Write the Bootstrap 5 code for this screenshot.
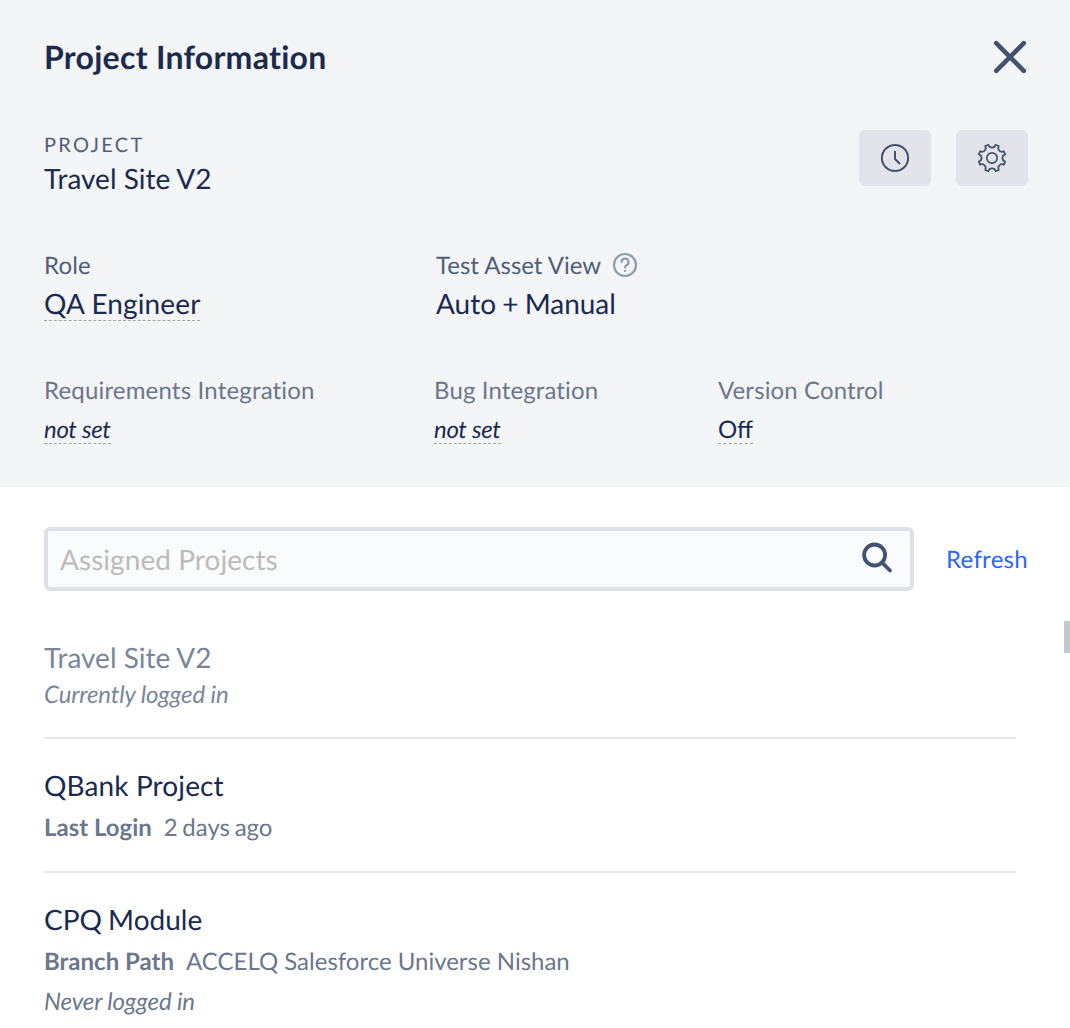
<!DOCTYPE html>
<html lang="en">
<head>
<meta charset="utf-8">
<title>Project Information</title>
<link href="https://cdn.jsdelivr.net/npm/bootstrap@5.3.0/dist/css/bootstrap.min.css" rel="stylesheet">
<style>
  html, body { height: 100%; overflow: hidden; }
  body { font-family: Lato, sans-serif; font-variant-ligatures: none; text-rendering: geometricPrecision; color: #1a2a50; background: #fff; }
  .panel-head { background: #f4f5f7; height: 487px; padding: 37px 42px 0 44px; }
  .panel-body { padding: 40px 42px 0 44px; }
  .ttl { font-size: 32px; line-height: 40px; font-weight: 700; letter-spacing: .27px; color: #1b2a4e; }
  .close-btn { margin-top: 3px; }
  .summary { margin-top: 53px; }
  .eyebrow { margin-top: 3px; font-size: 20px; line-height: 24px; letter-spacing: 2.3px; color: #505f79; }
  .val { font-size: 28px; line-height: 34px; color: #1a2a50; }
  .eyebrow + .val { margin-top: 4px; }
  .val-sm { font-size: 24px; line-height: 31px; height: 30px; color: #1a2a50; margin-top: 7px; }
  .lbl { font-size: 24px; line-height: 32px; color: #505f79; }
  .lbl + .val { margin-top: 4px; }
  .info-row { margin-top: 55px; }
  .info-row + .info-row { margin-top: 54px; }
  .soft { color: #6b778c; }
  .faded { color: #7a869a; }
  .wide { letter-spacing: .18px; }
  .wide-sm { letter-spacing: .12px; }
  .tight { word-spacing: -1px; }
  .fst-italic { letter-spacing: -.12px; }
  .val-sm.fst-italic { letter-spacing: -.3px; }
  .with-liga { font-variant-ligatures: normal; }
  .dash { display: inline-block; border-bottom: 1px dashed #a5a5ad; }
  .tool { width: 72px; height: 56px; background: #e2e4e9; border-radius: 6px; border: 0; padding: 0; color: #42526e; }
  .tools { gap: 25px; }
  .c1 { width: 392px; } .c2 { width: 390px; } .c3 { width: 284px; }
  .search-box { width: 870px; height: 64px; border: 4px solid #dfe1e6; border-radius: 6px; background: #fafbfc; padding: 0 17px 0 12px; }
  .search-box input { font-size: 28px; line-height: 34px; color: #1a2a50; text-rendering: inherit; }
  .search-box input::placeholder { color: #bbb; opacity: 1; letter-spacing: .05px; }
  .search-box svg { margin-bottom: 2px; }
  .refresh { font-size: 24px; line-height: 30px; padding-top: 2px; letter-spacing: .3px; color: #2d67f6; text-decoration: none; }
  .proj { width: 972px; border-bottom: 2px solid #e8e8e9; padding: 29px 0 27px; }
  .proj .val + .lbl { margin-top: 10px; }
  .proj .lbl + .lbl { margin-top: 8px; }
  .proj.current { padding: 49px 0 26px; }
  .proj.current .val + .lbl { margin-top: 5px; }
  .proj b { margin-right: 12px; }
  .ago { word-spacing: -1.500px; }
  .thumb { right: 0; top: 621px; width: 6px; height: 32px; background: #c1c9d0; }
</style>
</head>
<body>
<header class="panel-head">
  <div class="d-flex justify-content-between align-items-start">
    <h1 class="ttl mb-0">Project Information</h1>
    <button class="btn p-0 border-0 d-flex close-btn" aria-label="Close">
      <svg width="36" height="36" viewBox="0 0 36 36" stroke="#42526e" stroke-width="4.6" stroke-linecap="round"><path d="M4.200 3.200 31.800 30.800M31.800 3.200 4.200 30.800"/></svg>
    </button>
  </div>
  <div class="d-flex justify-content-between align-items-start summary">
    <div>
      <div class="eyebrow">PROJECT</div>
      <div class="val">Travel Site V2</div>
    </div>
    <div class="d-flex tools">
      <button class="tool d-flex align-items-center justify-content-center" aria-label="History">
        <svg width="32" height="32" viewBox="0 0 32 32" fill="none" stroke="currentColor" stroke-width="2"><circle cx="16" cy="16" r="13.100"/><path d="M16 9v8l5 5"/></svg>
      </button>
      <button class="tool d-flex align-items-center justify-content-center" aria-label="Settings">
        <svg width="32" height="32" viewBox="-16 -16 32 32" fill="none" stroke="currentColor" stroke-width="1.7" stroke-linejoin="round"><circle r="5.200"/><path d="M13.2 3.66 11.92 6.75A3.8 3.8 0 0 0 6.75 11.92L3.66 13.2A3.8 3.8 0 0 0-3.66 13.2L-6.75 11.92A3.8 3.8 0 0 0-11.92 6.75L-13.2 3.66A3.8 3.8 0 0 0-13.2-3.66L-11.92-6.75A3.8 3.8 0 0 0-6.75-11.92L-3.66-13.2A3.8 3.8 0 0 0 3.66-13.2L6.75-11.92A3.8 3.8 0 0 0 11.92-6.75L13.2-3.66A3.8 3.8 0 0 0 13.2 3.66Z"/></svg>
      </button>
    </div>
  </div>
  <div class="d-flex info-row">
    <div class="c1">
      <div class="lbl wide">Role</div>
      <div class="val dash wide-sm">QA Engineer</div>
    </div>
    <div>
      <div class="lbl d-flex align-items-start">Test Asset View
        <svg class="ms-2" width="32" height="30" viewBox="0 1 32 30" fill="none" stroke="#8c9bb0" stroke-width="2.200" stroke-linecap="round"><circle cx="16" cy="16" r="11"/><path d="M12.500 13a3.500 3.500 0 1 1 5 3.200q-1.500.8-1.500 2.300M16 21.800v.1"/></svg>
      </div>
      <div class="val tight">Auto + Manual</div>
    </div>
  </div>
  <div class="d-flex info-row">
    <div class="c2"><div class="lbl soft wide">Requirements Integration</div><div class="val-sm dash fst-italic">not set</div></div>
    <div class="c3"><div class="lbl soft wide-sm">Bug Integration</div><div class="val-sm dash fst-italic">not set</div></div>
    <div><div class="lbl soft wide-sm">Version Control</div><div class="val-sm dash with-liga">Off</div></div>
  </div>
</header>
<main class="panel-body">
  <div class="d-flex align-items-center justify-content-between">
    <div class="search-box d-flex align-items-center">
      <input class="flex-grow-1 border-0 bg-transparent p-0" placeholder="Assigned Projects">
      <svg width="32" height="32" viewBox="0 0 32 32" fill="none" stroke="#42526e" stroke-width="3.800" stroke-linecap="round"><circle cx="13.600" cy="13" r="10.500"/><path d="m22 21.500 7 7"/></svg>
    </div>
    <a class="refresh" href="#">Refresh</a>
  </div>
  <div class="proj current">
    <div class="val faded">Travel Site V2</div>
    <div class="lbl faded fst-italic">Currently logged in</div>
  </div>
  <div class="proj">
    <div class="val wide-sm">QBank Project</div>
    <div class="lbl soft"><b>Last Login</b><span class="ago">2 days ago</span></div>
  </div>
  <div class="proj border-0">
    <div class="val tight">CPQ Module</div>
    <div class="lbl soft"><b>Branch Path</b><span>ACCELQ Salesforce Universe Nishan</span></div>
    <div class="lbl soft fst-italic">Never logged in</div>
  </div>
</main>
<div class="thumb position-fixed"></div>
<script src="https://cdn.jsdelivr.net/npm/bootstrap@5.3.0/dist/js/bootstrap.bundle.min.js"></script>
</body>
</html>
